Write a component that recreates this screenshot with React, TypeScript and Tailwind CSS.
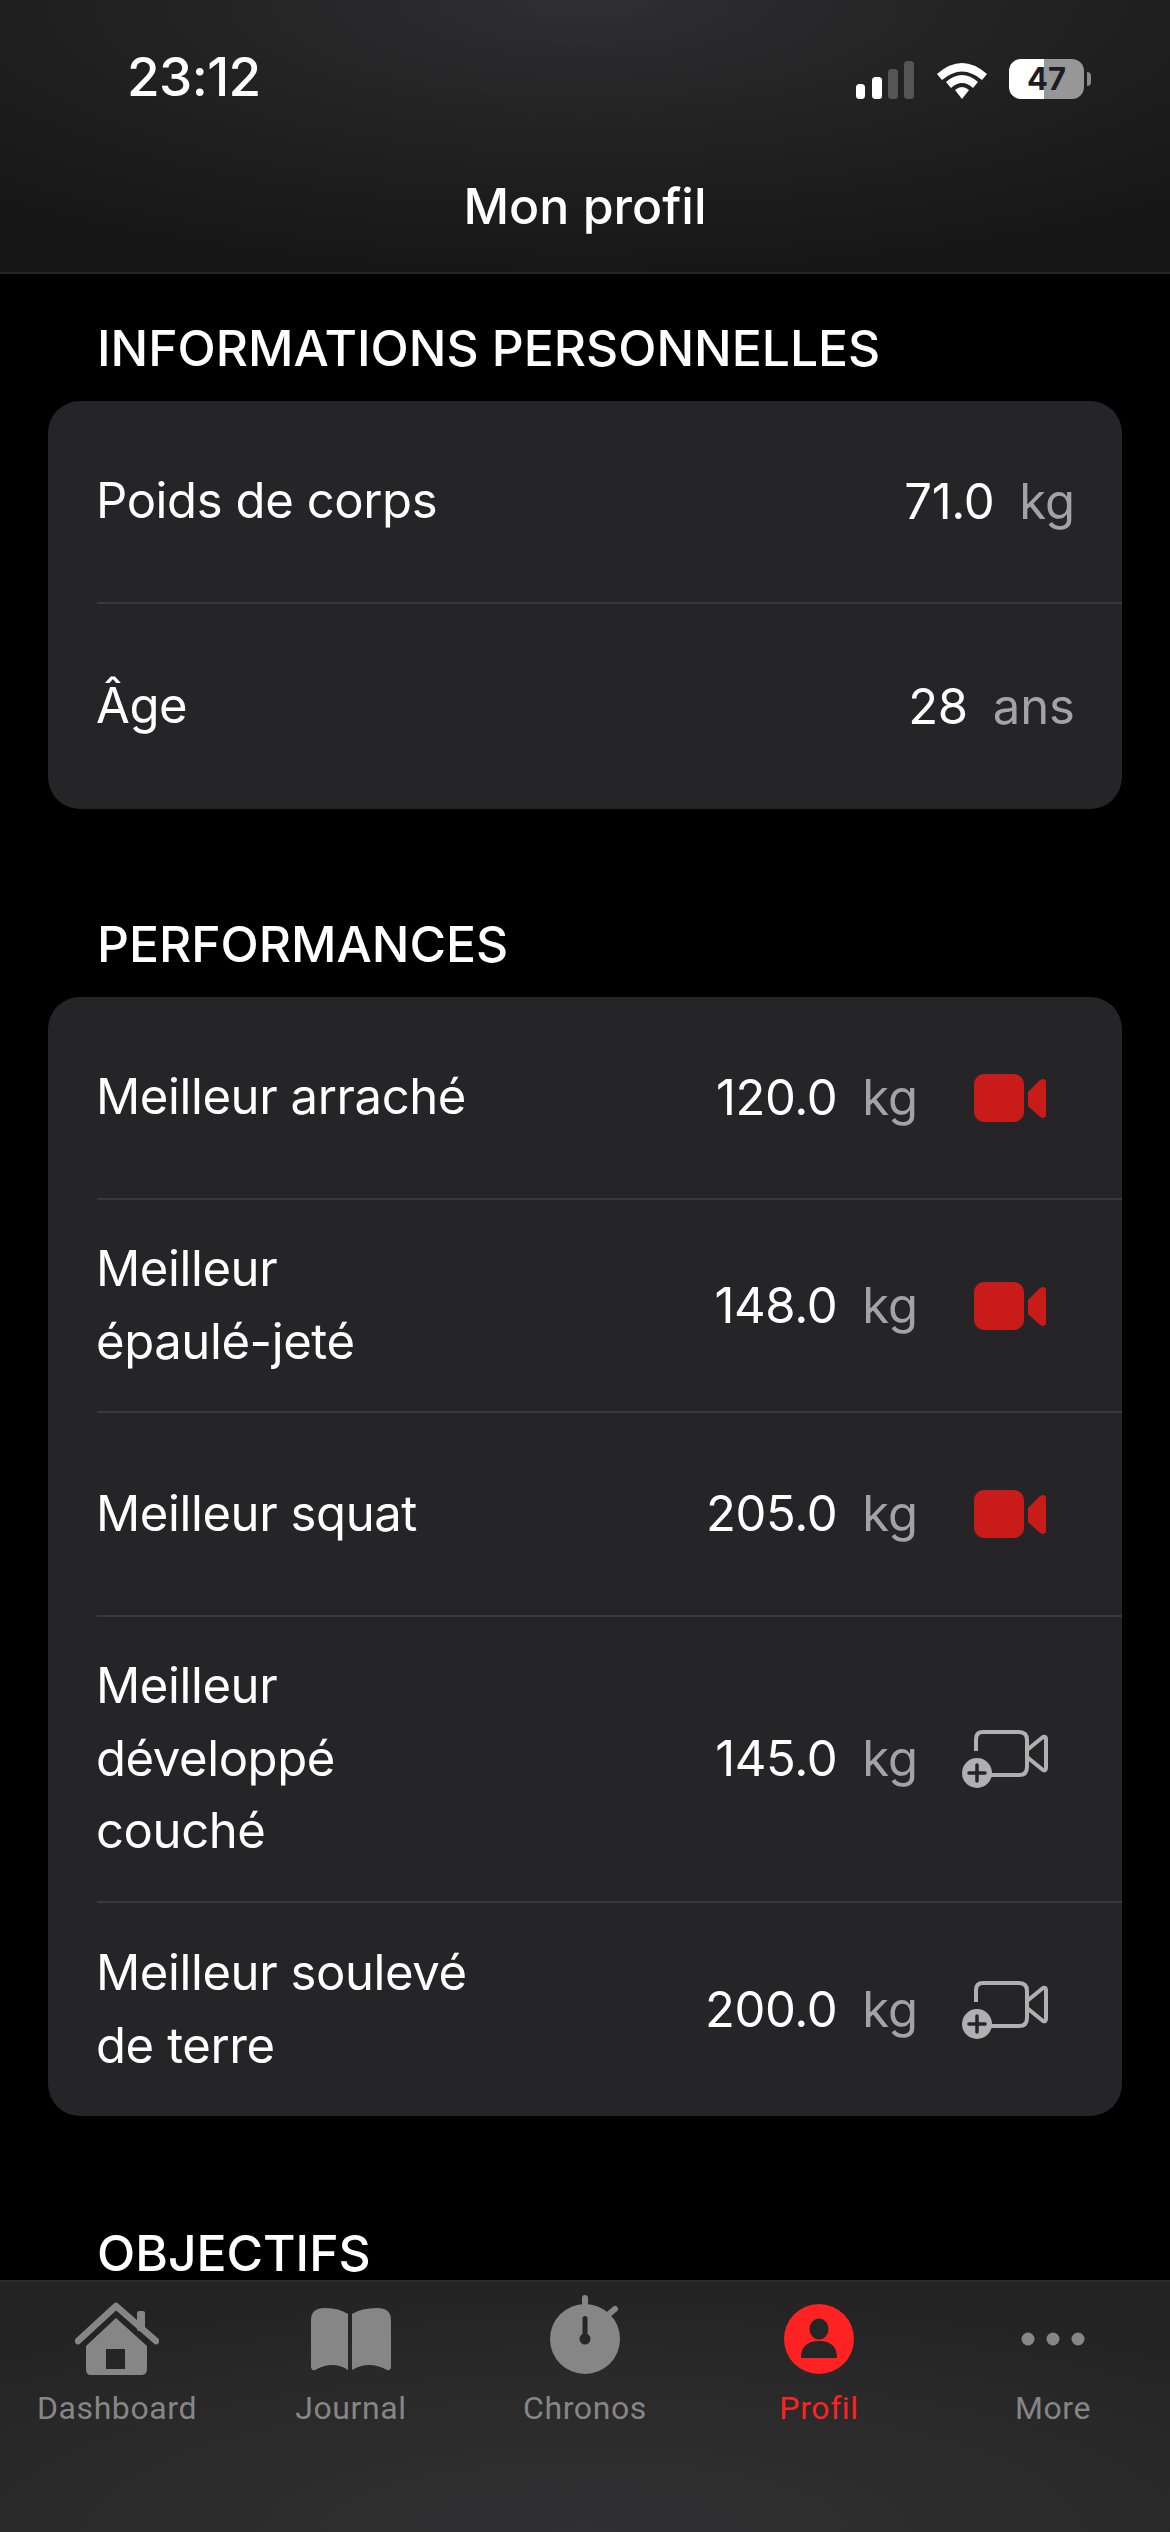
import type { ReactNode } from "react";

const font = { fontFamily: "Inter, 'Noto Sans', sans-serif" };

function CameraFilled() {
  return (
    <svg width="74" height="50" viewBox="0 0 74 50" className="block">
      <rect x="0" y="1" width="50" height="48" rx="10" fill="#c91c1a" />
      <path d="M54 19 L65 8 Q67 6 69 6 Q72 6 72 10 V41 Q72 45 69 45 Q67 45 65 43 L54 33 Z" fill="#c91c1a" />
    </svg>
  );
}

function CameraAdd() {
  return (
    <svg width="86" height="58" viewBox="0 0 86 58" className="block">
      <path d="M14 21 V9 Q14 2 21 2 H57 Q65 2 65 10 V37 Q65 45 57 45 H29" fill="none" stroke="#b0b0b0" strokeWidth="4" />
      <path d="M65 20 L81 7 Q84 6 84 9 V38 Q84 41 81 40 L65 27" fill="none" stroke="#b0b0b0" strokeWidth="4" strokeLinejoin="round" />
      <circle cx="15" cy="43" r="15" fill="#b0b0b0" />
      <path d="M15 35 V51 M7 43 H23" stroke="#252527" strokeWidth="3.5" strokeLinecap="round" />
    </svg>
  );
}

function Row({ label, value, unit, icon, className }: { label: ReactNode; value: string; unit: string; icon?: ReactNode; className: string }) {
  return (
    <div className={`ml-[49px] flex items-center pr-[47px] ${className}`}>
      <div className="-ml-[1px] flex-1 text-[49px] leading-[72.5px] tracking-[-0.4px] text-white">{label}</div>
      <div className="text-[49px] tracking-[-0.4px] text-white">{value}</div>
      <div className="ml-[25px] text-[49px] text-[#a3a3a5]">{unit}</div>
      {icon && <div className="ml-[42px] mr-[27px] flex w-[88px] justify-end">{icon}</div>}
    </div>
  );
}

function SectionTitle({ children, className }: { children: ReactNode; className: string }) {
  return <h2 className={`pl-[97px] text-[49.8px] leading-[56px] font-medium text-white ${className}`}>{children}</h2>;
}

function StatusBar() {
  return (
    <div className="flex h-[102px] items-end justify-between pl-[127px] pr-[79px]">
      <span className="text-[53px] leading-[50px] font-medium tracking-[-0.6px] text-white">23:12</span>
      <div className="mb-[3px] flex items-end">
        <svg width="58" height="38" viewBox="0 0 58 38" className="block">
          <rect x="0" y="23" width="9" height="15" rx="3.5" fill="#fff" />
          <rect x="16" y="16" width="10" height="22" rx="3.5" fill="#fff" />
          <rect x="32" y="8" width="10" height="30" rx="3.5" fill="#555" />
          <rect x="48" y="0" width="10" height="38" rx="3.5" fill="#555" />
        </svg>
        <svg width="52" height="38" viewBox="0 0 52 38" className="ml-[22px] block">
          <path d="M1 13 Q26 -9 51 13 L46 19 Q26 2 6 19 Z" fill="#fff" />
          <path d="M10 21 Q26 7 42 21 L37 27 Q26 17 15 27 Z" fill="#fff" />
          <path d="M19 29 Q26 23 33 29 L26 38 Z" fill="#fff" />
        </svg>
        <div className="relative ml-[21px] flex h-[40px] w-[75px] overflow-hidden rounded-[12px]">
          <div className="w-[35px] bg-white" />
          <div className="flex-1 bg-[#979797]" />
          <span className="absolute inset-0 text-center text-[31px] leading-[40px] font-bold text-[#1d1d1f]">47</span>
        </div>
        <div className="mb-[13px] ml-[3px] h-[14px] w-[4px] rounded-r-full bg-[#8a8a8a]" />
      </div>
    </div>
  );
}

function TabIcon({ name }: { name: string }) {
  if (name === "Dashboard") {
    return (
      <svg width="84" height="74" viewBox="0 0 84 74">
        <path d="M3 39 L41 4 L81 39" fill="none" stroke="#868686" strokeWidth="6.5" strokeLinecap="round" strokeLinejoin="round" />
        <rect x="62" y="9" width="8" height="20" rx="2" fill="#868686" />
        <path fillRule="evenodd" d="M41 16 L72 44 V67 Q72 73 66 73 H16 Q11 73 11 67 V44 Z M31 47 V67 H50 V47 Z" fill="#868686" />
      </svg>
    );
  }
  if (name === "Journal") {
    return (
      <svg width="80" height="66" viewBox="0 0 80 66">
        <path d="M37 8 Q28 2 14 2 Q0 2 0 14 V60 Q0 65 4 64 Q22 54 37 64 Z" fill="#868686" />
        <path d="M41 8 Q50 2 66 2 Q80 2 80 14 V60 Q80 65 76 64 Q58 54 41 64 Z" fill="#868686" />
      </svg>
    );
  }
  if (name === "Chronos") {
    return (
      <svg width="72" height="88" viewBox="0 0 72 88">
        <circle cx="36" cy="44" r="35" fill="#868686" />
        <rect x="33" y="0" width="6" height="12" rx="3" fill="#868686" />
        <path d="M60 19 L66 14" stroke="#868686" strokeWidth="6" strokeLinecap="round" />
        <rect x="33.5" y="21" width="5" height="24" rx="2.5" fill="#262626" />
        <circle cx="36" cy="44" r="5.5" fill="#262626" />
      </svg>
    );
  }
  if (name === "Profil") {
    return (
      <svg width="70" height="70" viewBox="0 0 70 70">
        <circle cx="35" cy="35" r="35" fill="#fe2222" />
        <ellipse cx="35" cy="25" rx="9.5" ry="10.5" fill="#262626" />
        <path d="M17 54 Q17 37 35 37 Q53 37 53 54 Z" fill="#262626" />
      </svg>
    );
  }
  return (
    <svg width="64" height="14" viewBox="0 0 64 14">
      <circle cx="7" cy="7" r="6.5" fill="#868686" />
      <circle cx="32" cy="7" r="6.5" fill="#868686" />
      <circle cx="57" cy="7" r="6.5" fill="#868686" />
    </svg>
  );
}

const tabs = ["Dashboard", "Journal", "Chronos", "Profil", "More"];

export default function App() {
  return (
    <div className="flex h-[2532px] w-[1170px] flex-col overflow-hidden bg-black" style={font}>
      <header className="h-[274px] shrink-0 border-b-2 border-[#262626] bg-[radial-gradient(ellipse_75%_100%_at_50%_0%,#2f2f31_0%,#222223_50%,#171717_100%)]">
        <StatusBar />
        <h1 className="mt-[74px] text-center text-[50px] leading-[60px] font-medium text-white">Mon profil</h1>
      </header>

      <main className="min-h-0 flex-1 overflow-hidden">
        <SectionTitle className="mt-[46px]">INFORMATIONS PERSONNELLES</SectionTitle>
        <section className="mx-[48px] mt-[25px] overflow-hidden rounded-[32px] bg-[#252527]">
          <Row label="Poids de corps" value="71.0" unit="kg" className="h-[203px] border-b-2 border-[#39393b]" />
          <Row label="Âge" value="28" unit="ans" className="h-[205px]" />
        </section>

        <SectionTitle className="mt-[107px]">PERFORMANCES</SectionTitle>
        <section className="mx-[48px] mt-[25px] overflow-hidden rounded-[32px] bg-[#252527]">
          <Row label="Meilleur arraché" value="120.0" unit="kg" icon={<CameraFilled />} className="h-[203px] border-b-2 border-[#39393b]" />
          <Row label={<>Meilleur<br />épaulé-jeté</>} value="148.0" unit="kg" icon={<CameraFilled />} className="h-[213px] border-b-2 border-[#39393b]" />
          <Row label="Meilleur squat" value="205.0" unit="kg" icon={<CameraFilled />} className="h-[204px] border-b-2 border-[#39393b]" />
          <Row label={<>Meilleur<br />développé<br />couché</>} value="145.0" unit="kg" icon={<CameraAdd />} className="h-[286px] border-b-2 border-[#39393b]" />
          <Row label={<>Meilleur soulevé<br />de terre</>} value="200.0" unit="kg" icon={<CameraAdd />} className="h-[213px]" />
        </section>

        <SectionTitle className="mt-[109px]">OBJECTIFS</SectionTitle>
      </main>

      <nav className="flex h-[252px] shrink-0 border-t-2 border-[#2a2a2a] bg-[radial-gradient(ellipse_80%_100%_at_50%_100%,#303032_0%,#2a2a2a_60%,#232323_100%)]">
        {tabs.map((t) => (
          <div key={t} className="flex flex-1 flex-col items-center">
            <div className="flex h-[114px] w-full items-center justify-center">
              <TabIcon name={t} />
            </div>
            <span className={`mt-[1px] text-[32px] leading-[22px] tracking-[0.6px] ${t === "Profil" ? "text-[#fe2222]" : "text-[#868686]"}`} style={{ fontFamily: "Roboto, sans-serif" }}>
              {t}
            </span>
          </div>
        ))}
      </nav>
    </div>
  );
}
